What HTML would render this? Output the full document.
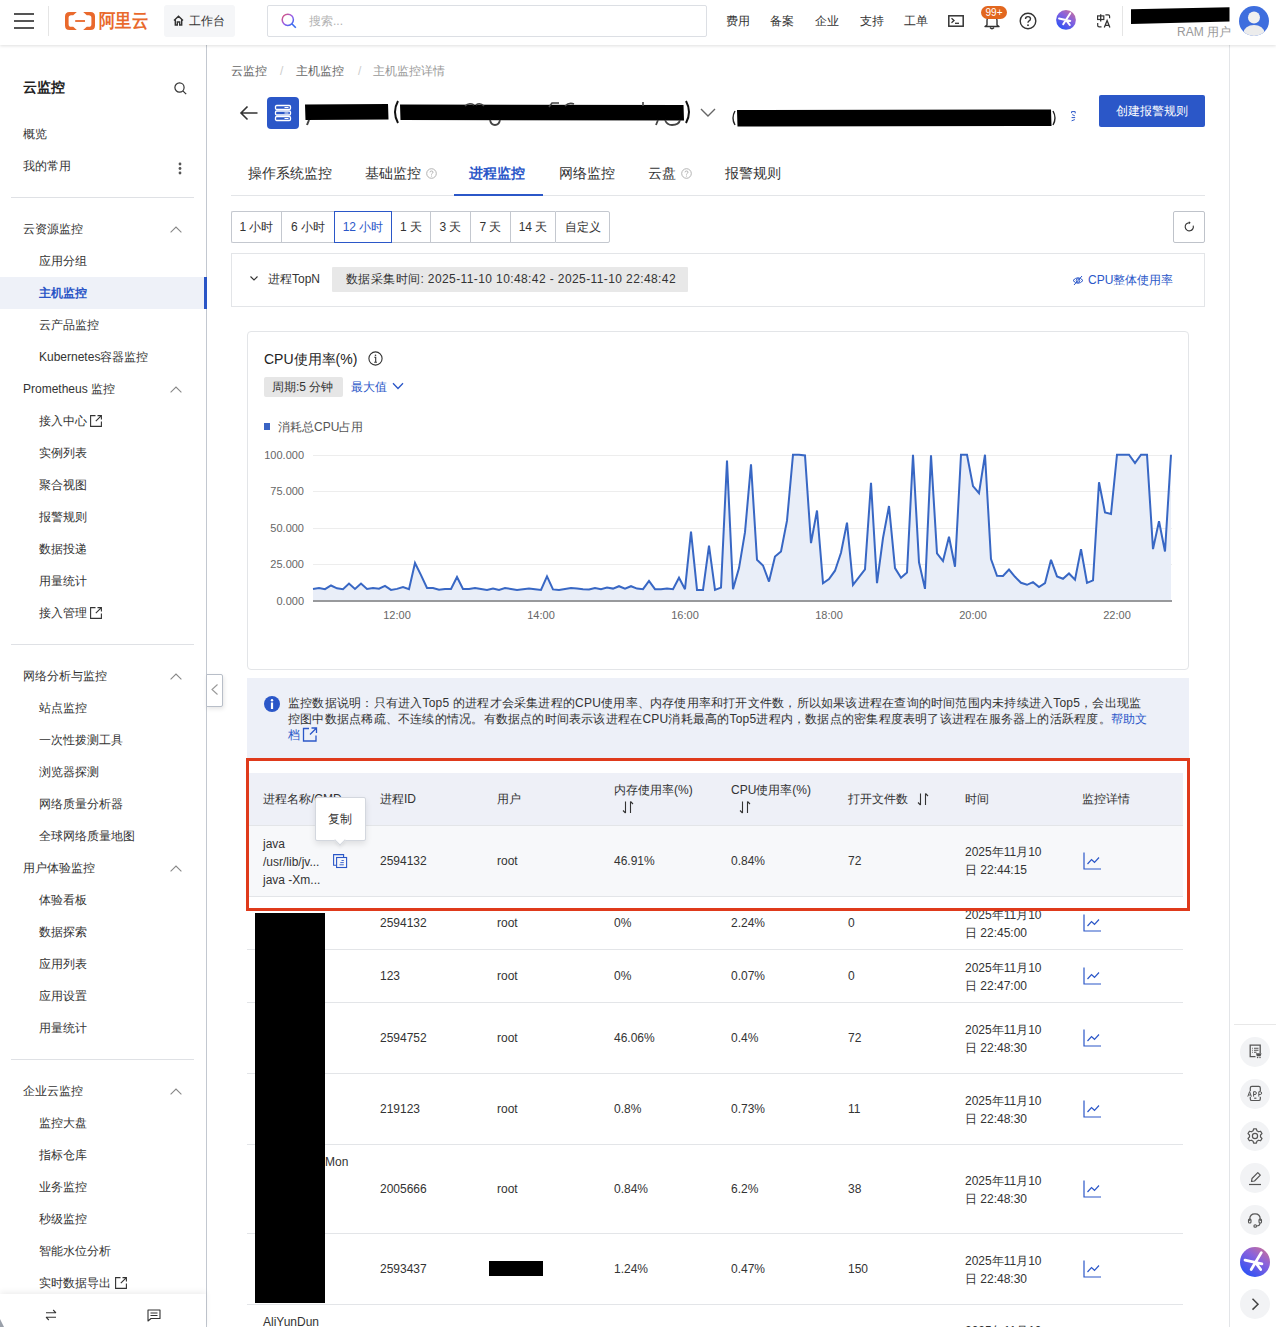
<!DOCTYPE html>
<html><head><meta charset="utf-8">
<style>
*{box-sizing:border-box;margin:0;padding:0}
html,body{width:1276px;height:1327px;overflow:hidden;background:#fff}
body{position:relative;font-family:"Liberation Sans",sans-serif;color:#333;font-size:12px;line-height:1}
.a{position:absolute;white-space:nowrap}
svg{position:absolute;overflow:visible}
/* topbar */
#top{position:absolute;left:0;top:0;width:1276px;height:45px;background:#fff;box-shadow:0 1px 3px rgba(0,0,0,.13);z-index:5}
.nav{font-size:12px;color:#333;top:15px}
/* sidebar */
#side{position:absolute;left:0;top:45px;width:207px;height:1282px;background:#fff;border-right:1px solid #c3c8d0}
.si{font-size:12px;color:#333;left:39px}
.sg{font-size:12px;color:#333;left:23px}
.sep{position:absolute;left:11px;width:183px;height:1px;background:#dfe1e5}
.chev{position:absolute;left:170px;width:12px;height:7px}
/* main */
.bc{font-size:12px;color:#666;top:64px}
.tab{font-size:14px;color:#333;top:166px}
.tb{position:absolute;top:211px;height:32px;border:1px solid #c4c8cf;border-right:none;font-size:12px;color:#333;text-align:center;line-height:30px;white-space:nowrap}
.th{font-size:12px;color:#333}
.td{font-size:12px;color:#333}
.rl{position:absolute;left:247px;width:936px;height:1px;background:#e3e5e8}
.ic{position:absolute;width:18px;height:18px}
.rc{position:absolute;left:1240px;width:30px;height:30px;border-radius:50%;background:#f2f3f5}
</style></head><body>

<!-- ================= TOP BAR ================= -->
<div id="top">
  <!-- hamburger -->
  <div style="position:absolute;left:14px;top:13px;width:20px;height:2px;background:#555"></div>
  <div style="position:absolute;left:14px;top:20px;width:20px;height:2px;background:#555"></div>
  <div style="position:absolute;left:14px;top:27px;width:20px;height:2px;background:#555"></div>
  <div style="position:absolute;left:48px;top:6px;width:1px;height:30px;background:#e5e5e5"></div>
  <!-- logo -->
  <svg style="left:65px;top:12px" width="30" height="18" viewBox="0 0 30 18">
    <path id="lb" d="M4.5 0H11.8L8.2 3.2H6.2Q3.6 3.2 3.6 5.8V12.2Q3.6 14.8 6.2 14.8H8.2L11.8 18H4.5Q0 18 0 13.5V4.5Q0 0 4.5 0Z" fill="#e9692c"/>
    <path d="M4.5 0H11.8L8.2 3.2H6.2Q3.6 3.2 3.6 5.8V12.2Q3.6 14.8 6.2 14.8H8.2L11.8 18H4.5Q0 18 0 13.5V4.5Q0 0 4.5 0Z" fill="#e9692c" transform="translate(30,0) scale(-1,1)"/>
    <rect x="10.2" y="8.1" width="9.8" height="1.8" fill="#e9692c"/>
  </svg>
  <div class="a" style="left:99px;top:11px;font-size:19px;font-weight:bold;color:#e9692c;transform:scaleX(0.86);transform-origin:0 0">阿里云</div>
  <!-- workbench -->
  <div style="position:absolute;left:164px;top:5px;width:71px;height:32px;background:#f5f6f8;border-radius:3px"></div>
  <svg style="left:173px;top:15px" width="11" height="11" viewBox="0 0 11 11"><path d="M1 5.5L5.5 1.2L10 5.5M2.3 4.5V10H4.3V7H6.7V10H8.7V4.5" fill="none" stroke="#333" stroke-width="1.4"/></svg>
  <div class="a" style="left:189px;top:15px;font-size:12px;color:#333">工作台</div>
  <!-- search -->
  <div style="position:absolute;left:267px;top:5px;width:440px;height:32px;border:1px solid #dcdfe4;border-radius:2px;background:#fff"></div>
  <svg style="left:281px;top:13px" width="16" height="16" viewBox="0 0 16 16"><defs><linearGradient id="sg" x1="0" y1="0" x2="1" y2="1"><stop offset="0" stop-color="#e0556d"/><stop offset="0.5" stop-color="#9a5ce8"/><stop offset="1" stop-color="#2f6cf0"/></linearGradient></defs><circle cx="6.8" cy="6.8" r="5.6" fill="none" stroke="url(#sg)" stroke-width="1.5"/><path d="M10.8 10.8L14.8 14.8" stroke="#3a6cf0" stroke-width="1.6"/></svg>
  <div class="a" style="left:309px;top:15px;font-size:12px;color:#b3b3b3">搜索...</div>
  <!-- nav -->
  <div class="a nav" style="left:726px">费用</div>
  <div class="a nav" style="left:770px">备案</div>
  <div class="a nav" style="left:815px">企业</div>
  <div class="a nav" style="left:860px">支持</div>
  <div class="a nav" style="left:904px">工单</div>
  <!-- terminal -->
  <svg style="left:948px;top:15px" width="16" height="12" viewBox="0 0 16 12"><rect x="0.8" y="0.8" width="14.4" height="10.4" fill="none" stroke="#333" stroke-width="1.5"/><path d="M3.5 3.3L6 5.5L3.5 7.7" fill="none" stroke="#333" stroke-width="1.3"/><path d="M7 8.3H11" stroke="#333" stroke-width="1.3"/></svg>
  <!-- bell -->
  <svg style="left:983px;top:13px" width="18" height="17" viewBox="0 0 18 17"><path d="M4 12V7.5Q4 2.5 9 2.5Q14 2.5 14 7.5V12L16 13.5H2Z" fill="none" stroke="#333" stroke-width="1.4" stroke-linejoin="round"/><path d="M7 14.5Q9 17 11 14.5" fill="none" stroke="#333" stroke-width="1.3"/></svg>
  <div class="a" style="left:981px;top:6px;width:26px;height:13px;border-radius:7px;background:#e2671f;color:#fff;font-size:10px;line-height:13px;text-align:center">99+</div>
  <!-- help -->
  <svg style="left:1019px;top:12px" width="18" height="18" viewBox="0 0 18 18"><circle cx="9" cy="9" r="7.8" fill="none" stroke="#333" stroke-width="1.4"/><path d="M6.5 7Q6.5 4.6 9 4.6Q11.5 4.6 11.5 6.8Q11.5 8.3 9.8 9.1Q9 9.5 9 10.8" fill="none" stroke="#333" stroke-width="1.4"/><circle cx="9" cy="13.2" r="0.9" fill="#333"/></svg>
  <!-- gradient ai -->
  <svg style="left:1056px;top:10px" width="20" height="20" viewBox="0 0 20 20"><defs><linearGradient id="ag" x1="1" y1="0" x2="0.3" y2="1"><stop offset="0" stop-color="#d5728a"/><stop offset="0.45" stop-color="#8a62dc"/><stop offset="1" stop-color="#2d52f5"/></linearGradient></defs><circle cx="10" cy="9.9" r="9.9" fill="url(#ag)"/><path d="M14.3 3.2L7.2 14.2M3.05 8.4L14.3 10.9M9.9 9.8L13.8 15" stroke="#fff" stroke-width="2" stroke-linecap="round"/></svg>
  <!-- translate -->
  
  <svg style="left:1096px;top:13px" width="16" height="16" viewBox="0 0 16 16"><rect x="1.6" y="2.9" width="6.2" height="3.6" fill="none" stroke="#333" stroke-width="1.2"/><path d="M4.7 1.2V8.6" stroke="#333" stroke-width="1.3"/><path d="M9.4 1.8H12.3Q13.6 1.8 13.6 3.2V5.3M1.7 10V12.4Q1.7 13.8 3.2 13.8H5.5" fill="none" stroke="#333" stroke-width="1.2"/><path d="M8.3 14.6L11.1 7.6L13.9 14.6M9.3 12.3H12.9" fill="none" stroke="#333" stroke-width="1.3"/></svg>
  <div style="position:absolute;left:1122px;top:6px;width:1px;height:30px;background:#e5e5e5"></div>
  <!-- user -->
  <svg style="left:1131px;top:7px" width="99" height="18" viewBox="0 0 99 18"><path d="M0 2.2L98.5 0.2V14.5L0 17Z" fill="#000"/></svg>
  <div class="a" style="left:1177px;top:26px;font-size:12px;color:#999">RAM 用户</div>
  <svg style="left:1239px;top:6px" width="30" height="30" viewBox="0 0 30 30"><defs><clipPath id="avc"><circle cx="15" cy="15" r="15"/></clipPath></defs><circle cx="15" cy="15" r="15" fill="#3e6ede"/><g clip-path="url(#avc)"><circle cx="15" cy="11.5" r="6" fill="#f0f0f0"/><ellipse cx="15" cy="27" rx="10.5" ry="8" fill="#ececec"/></g></svg>
</div>

<!-- ================= SIDEBAR ================= -->
<div id="side"></div>
<div class="a" style="left:23px;top:80px;font-size:14px;font-weight:bold;color:#222">云监控</div>
<svg style="left:174px;top:82px" width="13" height="13" viewBox="0 0 13 13"><circle cx="5.5" cy="5.5" r="4.6" fill="none" stroke="#333" stroke-width="1.2"/><path d="M8.8 8.8L12.2 12.2" stroke="#333" stroke-width="1.2"/></svg>
<div class="a sg" style="top:128px">概览</div>
<div class="a sg" style="top:160px">我的常用</div>
<svg style="left:177px;top:161px" width="6" height="14" viewBox="0 0 6 14"><circle cx="3" cy="3" r="1.4" fill="#555"/><circle cx="3" cy="7.5" r="1.4" fill="#555"/><circle cx="3" cy="12" r="1.4" fill="#555"/></svg>
<div class="sep" style="top:197px"></div>

<div class="a sg" style="top:223px">云资源监控</div>
<div class="a si" style="top:255px">应用分组</div>
<div style="position:absolute;left:0;top:277px;width:206px;height:32px;background:#eef1f8"></div>
<div style="position:absolute;left:204px;top:277px;width:3px;height:32px;background:#2a55c6"></div>
<div class="a si" style="top:287px;color:#2a55c6;font-weight:bold">主机监控</div>
<div class="a si" style="top:319px">云产品监控</div>
<div class="a si" style="top:351px">Kubernetes容器监控</div>
<div class="a sg" style="top:383px">Prometheus 监控</div>
<div class="a si" style="top:415px">接入中心</div>
<div class="a si" style="top:447px">实例列表</div>
<div class="a si" style="top:479px">聚合视图</div>
<div class="a si" style="top:511px">报警规则</div>
<div class="a si" style="top:543px">数据投递</div>
<div class="a si" style="top:575px">用量统计</div>
<div class="a si" style="top:607px">接入管理</div>
<div class="sep" style="top:644px"></div>
<div class="a sg" style="top:670px">网络分析与监控</div>
<div class="a si" style="top:702px">站点监控</div>
<div class="a si" style="top:734px">一次性拨测工具</div>
<div class="a si" style="top:766px">浏览器探测</div>
<div class="a si" style="top:798px">网络质量分析器</div>
<div class="a si" style="top:830px">全球网络质量地图</div>
<div class="a sg" style="top:862px">用户体验监控</div>
<div class="a si" style="top:894px">体验看板</div>
<div class="a si" style="top:926px">数据探索</div>
<div class="a si" style="top:958px">应用列表</div>
<div class="a si" style="top:990px">应用设置</div>
<div class="a si" style="top:1022px">用量统计</div>
<div class="sep" style="top:1059px"></div>
<div class="a sg" style="top:1085px">企业云监控</div>
<div class="a si" style="top:1117px">监控大盘</div>
<div class="a si" style="top:1149px">指标仓库</div>
<div class="a si" style="top:1181px">业务监控</div>
<div class="a si" style="top:1213px">秒级监控</div>
<div class="a si" style="top:1245px">智能水位分析</div>
<div class="a si" style="top:1277px">实时数据导出</div>
<svg style="left:170px;top:226px" width="12" height="7" viewBox="0 0 12 7"><path d="M0.6 6.4L6 1L11.4 6.4" fill="none" stroke="#888" stroke-width="1.1"/></svg>
<svg style="left:170px;top:386px" width="12" height="7" viewBox="0 0 12 7"><path d="M0.6 6.4L6 1L11.4 6.4" fill="none" stroke="#888" stroke-width="1.1"/></svg>
<svg style="left:170px;top:673px" width="12" height="7" viewBox="0 0 12 7"><path d="M0.6 6.4L6 1L11.4 6.4" fill="none" stroke="#888" stroke-width="1.1"/></svg>
<svg style="left:170px;top:865px" width="12" height="7" viewBox="0 0 12 7"><path d="M0.6 6.4L6 1L11.4 6.4" fill="none" stroke="#888" stroke-width="1.1"/></svg>
<svg style="left:170px;top:1088px" width="12" height="7" viewBox="0 0 12 7"><path d="M0.6 6.4L6 1L11.4 6.4" fill="none" stroke="#888" stroke-width="1.1"/></svg>
<svg style="left:90px;top:415px" width="12" height="12" viewBox="0 0 12 12"><path d="M5.5 0.6H0.6V11.4H11.4V6.5" fill="none" stroke="#333" stroke-width="1.1"/><path d="M7.5 0.6H11.4V4.5M11.4 0.6L5.8 6.2" fill="none" stroke="#333" stroke-width="1.1"/></svg>
<svg style="left:90px;top:607px" width="12" height="12" viewBox="0 0 12 12"><path d="M5.5 0.6H0.6V11.4H11.4V6.5" fill="none" stroke="#333" stroke-width="1.1"/><path d="M7.5 0.6H11.4V4.5M11.4 0.6L5.8 6.2" fill="none" stroke="#333" stroke-width="1.1"/></svg>
<svg style="left:115px;top:1277px" width="12" height="12" viewBox="0 0 12 12"><path d="M5.5 0.6H0.6V11.4H11.4V6.5" fill="none" stroke="#333" stroke-width="1.1"/><path d="M7.5 0.6H11.4V4.5M11.4 0.6L5.8 6.2" fill="none" stroke="#333" stroke-width="1.1"/></svg>
<div style="position:absolute;left:0;top:1294px;width:206px;height:33px;background:#fff;box-shadow:0 -2px 6px rgba(0,0,0,.07)"></div>
<svg style="left:45px;top:1309px" width="12" height="12" viewBox="0 0 12 12"><path d="M1 3.8H11M8.2 1L11 3.8M11 8.2H1M3.8 11L1 8.2" fill="none" stroke="#333" stroke-width="1.1"/></svg>
<svg style="left:147px;top:1309px" width="14" height="13" viewBox="0 0 14 13"><path d="M1 1H13V9.5H4L1 12Z" fill="none" stroke="#333" stroke-width="1.1" stroke-linejoin="round"/><path d="M3.5 4H10.5M3.5 6.5H10.5" stroke="#333" stroke-width="1.1"/></svg>
<div style="position:absolute;left:206px;top:674px;width:17px;height:33px;background:#fff;border:1px solid #b8bec8;border-left:1px solid #b8bec8;border-radius:0 2px 2px 0;box-shadow:1px 2px 4px rgba(0,0,0,.1)"></div>
<svg style="left:211px;top:684px" width="7" height="11" viewBox="0 0 7 11"><path d="M6.5 0.5L1 5.5L6.5 10.5" fill="none" stroke="#999" stroke-width="1.1"/></svg>
<svg style="left:0;top:1319px" width="6" height="8" viewBox="0 0 6 8"><path d="M0 0L4 8H0Z" fill="#9aa0aa"/></svg>
<!--SIDEBAR_ICONS-->

<!-- ================= MAIN HEADER ================= -->
<div class="a bc" style="left:231px;top:65px">云监控</div>
<div class="a bc" style="left:280px;top:65px;color:#ccc">/</div>
<div class="a bc" style="left:296px;top:65px">主机监控</div>
<div class="a bc" style="left:358px;top:65px;color:#ccc">/</div>
<div class="a bc" style="left:373px;top:65px;color:#999">主机监控详情</div>

<svg style="left:239px;top:105px" width="20" height="16" viewBox="0 0 20 16"><path d="M18.5 8H2M8.5 1.5L2 8L8.5 14.5" fill="none" stroke="#333" stroke-width="1.6"/></svg>
<div style="position:absolute;left:267px;top:97px;width:32px;height:32px;border-radius:4px;background:#2b57c8"></div>
<svg style="left:274px;top:104px" width="18" height="18" viewBox="0 0 18 18"><g fill="none" stroke="#fff" stroke-width="1.3"><rect x="1.5" y="1.5" width="15" height="4" rx="1.2"/><rect x="1.5" y="7" width="15" height="4" rx="1.2"/><rect x="1.5" y="12.5" width="15" height="4" rx="1.2"/></g><path d="M10.5 3.5H14.5M10.5 9H14.5M10.5 14.5H14.5" stroke="#fff" stroke-width="1.2"/></svg>
<!-- title redaction -->
<svg style="left:303px;top:100px" width="420" height="26" viewBox="0 0 420 26">
  <path d="M2 4.5L85 4L85.5 19.5L2.5 20Z" fill="#000"/>
  
  <path d="M97 4.5L380.5 5L381 20.5L97.5 20Z" fill="#000"/>
  <path d="M95 1Q89 12 95 23" fill="none" stroke="#111" stroke-width="2"/>
  <path d="M383 1Q389 12 383 23" fill="none" stroke="#111" stroke-width="2"/>
  <path d="M162 6Q166 2 171 5M173 5Q177 2 181 6" fill="none" stroke="#444" stroke-width="1.6"/>
  <path d="M187 20Q188 25 192 25Q196 25 197 20" fill="none" stroke="#444" stroke-width="1.8"/>
  <path d="M246 7L249 3H256M262 6Q266 2 271 4M340 2V6" fill="none" stroke="#444" stroke-width="1.6"/>
  <path d="M355 20L353 25M362 20Q364 25 369 25Q376 25 377 20" fill="none" stroke="#444" stroke-width="1.8"/>
  <path d="M6 20L4 25" fill="none" stroke="#444" stroke-width="2"/>
  <path d="M398 9L405 16L412 9" fill="none" stroke="#666" stroke-width="1.4"/>
</svg>
<svg style="left:731px;top:108px" width="345" height="22" viewBox="0 0 345 22">
  <path d="M4 3Q0 10 4 17" fill="none" stroke="#222" stroke-width="1.4"/>
  <path d="M6 2L320 1.5L320.5 18L6.5 18.5Z" fill="#000"/>
  <path d="M322 3Q326 10 322 17" fill="none" stroke="#222" stroke-width="1.4"/>
</svg>
<svg style="left:1071px;top:111px" width="5" height="11" viewBox="0 0 5 11"><path d="M0.6 2.2V0.6H4.2V2.4M1.2 3.6L3.8 4.8M0.6 6.6H4.2M0.6 9.8L3.8 8.6" fill="none" stroke="#2b57c8" stroke-width="1"/></svg>
<div class="a" style="left:1099px;top:95px;width:106px;height:32px;background:#2b57c8;border-radius:2px;color:#fff;font-size:12px;line-height:32px;text-align:center">创建报警规则</div>

<!-- tabs -->
<div class="a tab" style="left:248px">操作系统监控</div>
<div class="a tab" style="left:365px">基础监控</div>
<svg style="left:426px;top:168px" width="11" height="11" viewBox="0 0 11 11"><circle cx="5.5" cy="5.5" r="4.8" fill="none" stroke="#aaa" stroke-width="0.9"/><path d="M4 4.3Q4 3 5.5 3Q7 3 7 4.2Q7 5 6.2 5.4Q5.5 5.7 5.5 6.6" fill="none" stroke="#aaa" stroke-width="0.9"/><circle cx="5.5" cy="8" r="0.55" fill="#aaa"/></svg>
<div class="a tab" style="left:469px;color:#2b57c8;font-weight:600">进程监控</div>
<div class="a tab" style="left:559px">网络监控</div>
<div class="a tab" style="left:648px">云盘</div>
<svg style="left:681px;top:168px" width="11" height="11" viewBox="0 0 11 11"><circle cx="5.5" cy="5.5" r="4.8" fill="none" stroke="#aaa" stroke-width="0.9"/><path d="M4 4.3Q4 3 5.5 3Q7 3 7 4.2Q7 5 6.2 5.4Q5.5 5.7 5.5 6.6" fill="none" stroke="#aaa" stroke-width="0.9"/><circle cx="5.5" cy="8" r="0.55" fill="#aaa"/></svg>
<div class="a tab" style="left:725px">报警规则</div>
<div style="position:absolute;left:231px;top:195px;width:974px;height:1px;background:#e3e5e8"></div>
<div style="position:absolute;left:454px;top:194px;width:89px;height:2px;background:#2b57c8"></div>

<!-- time buttons -->
<div class="tb" style="left:231px;width:50px;border-radius:2px 0 0 2px">1 小时</div>
<div class="tb" style="left:281px;width:53px">6 小时</div>
<div class="tb" style="left:334px;width:58px;border:1px solid #2b57c8;color:#2b57c8;z-index:2">12 小时</div>
<div class="tb" style="left:392px;width:38px;border-left:none">1 天</div>
<div class="tb" style="left:430px;width:40px">3 天</div>
<div class="tb" style="left:470px;width:40px">7 天</div>
<div class="tb" style="left:510px;width:45px">14 天</div>
<div class="tb" style="left:555px;width:55px;border-right:1px solid #c4c8cf;border-radius:0 2px 2px 0">自定义</div>
<div style="position:absolute;left:1173px;top:211px;width:32px;height:32px;border:1px solid #bfc3ca;border-radius:2px"></div>
<svg style="left:1183px;top:220px" width="12" height="13" viewBox="0 0 12 13"><path d="M10.2 5.6A4.1 4.1 0 1 1 6 2.7" fill="none" stroke="#333" stroke-width="1.1"/><path d="M5.9 1.2L7.7 2.7L5.9 4.2Z" fill="#333"/></svg>

<!-- topN panel -->
<div style="position:absolute;left:231px;top:253px;width:974px;height:54px;border:1px solid #e3e5e8"></div>
<svg style="left:250px;top:276px" width="8" height="5" viewBox="0 0 8 5"><path d="M0.5 0.5L4 4L7.5 0.5" fill="none" stroke="#333" stroke-width="1.1"/></svg>
<div class="a" style="left:268px;top:273px;font-size:12px;color:#333">进程TopN</div>
<div class="a" style="left:332px;top:267px;width:356px;height:25px;background:#e8e8e8;border-radius:1px"></div>
<div class="a" style="left:346px;top:273px;font-size:12px;color:#333;letter-spacing:0.4px">数据采集时间: 2025-11-10 10:48:42 - 2025-11-10 22:48:42</div>
<svg style="left:1072px;top:274.5px" width="12" height="11" viewBox="0 0 12 11"><path d="M1 5.5Q6 0 11 5.5Q6 11 1 5.5Z" fill="none" stroke="#2b57c8" stroke-width="1"/><circle cx="6" cy="5.5" r="1.8" fill="none" stroke="#2b57c8" stroke-width="1"/><path d="M2 10L10 1" stroke="#2b57c8" stroke-width="1"/></svg>
<div class="a" style="left:1088px;top:274px;font-size:12px;color:#2b57c8">CPU整体使用率</div>


<!-- ================= CHART CARD ================= -->
<div style="position:absolute;left:247px;top:331px;width:942px;height:339px;border:1px solid #e3e5e8;border-radius:4px"></div>
<div class="a" style="left:264px;top:352px;font-size:14px;color:#222;font-weight:500">CPU使用率(%)</div>
<svg style="left:368px;top:351px" width="15" height="15" viewBox="0 0 15 15"><circle cx="7.5" cy="7.5" r="6.6" fill="none" stroke="#333" stroke-width="1.1"/><circle cx="7.5" cy="4.3" r="0.8" fill="#333"/><path d="M6.3 6.3H7.7V11.3M6.2 11.3H8.9" fill="none" stroke="#333" stroke-width="1.1"/></svg>
<div style="position:absolute;left:264px;top:377px;width:79px;height:20px;background:#e6e6e6;border-radius:2px"></div>
<div class="a" style="left:272px;top:381px;font-size:12px;color:#333">周期:5 分钟</div>
<div class="a" style="left:351px;top:381px;font-size:12px;color:#2b57c8">最大值</div>
<svg style="left:392px;top:382px" width="12" height="8" viewBox="0 0 12 8"><path d="M1 1.2L6 6.5L11 1.2" fill="none" stroke="#2b57c8" stroke-width="1.3"/></svg>
<div style="position:absolute;left:264px;top:423px;width:6px;height:7px;background:#3a64c4"></div>
<div class="a" style="left:278px;top:421px;font-size:12px;color:#555">消耗总CPU占用</div>
<!-- axis labels -->
<div class="a" style="left:240px;width:64px;text-align:right;top:450px;font-size:11px;color:#666">100.000</div>
<div class="a" style="left:240px;width:64px;text-align:right;top:486px;font-size:11px;color:#666">75.000</div>
<div class="a" style="left:240px;width:64px;text-align:right;top:523px;font-size:11px;color:#666">50.000</div>
<div class="a" style="left:240px;width:64px;text-align:right;top:559px;font-size:11px;color:#666">25.000</div>
<div class="a" style="left:240px;width:64px;text-align:right;top:596px;font-size:11px;color:#666">0.000</div>
<div class="a" style="left:367px;width:60px;text-align:center;top:610px;font-size:11px;color:#666">12:00</div>
<div class="a" style="left:511px;width:60px;text-align:center;top:610px;font-size:11px;color:#666">14:00</div>
<div class="a" style="left:655px;width:60px;text-align:center;top:610px;font-size:11px;color:#666">16:00</div>
<div class="a" style="left:799px;width:60px;text-align:center;top:610px;font-size:11px;color:#666">18:00</div>
<div class="a" style="left:943px;width:60px;text-align:center;top:610px;font-size:11px;color:#666">20:00</div>
<div class="a" style="left:1087px;width:60px;text-align:center;top:610px;font-size:11px;color:#666">22:00</div>
<svg style="left:0;top:0" width="1276" height="1327" viewBox="0 0 1276 1327">
  <g stroke="#ededed" stroke-width="1">
    <path d="M313 455.5H1172M313 491.5H1172M313 528.5H1172M313 564.5H1172"/>
  </g>
  <path d="M313,601 L313,588.9 L319,588.0 L325,589.2 L331,585.5 L337,588.3 L343,589.2 L349,583.6 L355,588.9 L361,583.6 L367,588.9 L373,588.0 L379,588.7 L385,585.8 L391,589.9 L397,588.9 L403,587.0 L409,589.2 L415,563.0 L421,575.1 L427,588.0 L433,588.0 L439,589.8 L445,588.9 L451,588.9 L457,577.0 L463,589.0 L469,589.0 L475,588.0 L481,589.0 L487,590.0 L493,588.6 L499,590.0 L505,588.0 L511,589.0 L517,590.0 L523,589.3 L529,588.6 L535,589.3 L541,590.0 L547,576.4 L553,589.4 L559,590.0 L565,589.0 L571,588.0 L577,588.5 L583,589.2 L589,589.5 L595,588.0 L601,589.2 L607,587.6 L613,588.6 L619,586.2 L625,588.6 L631,586.2 L637,588.6 L643,589.2 L649,580.9 L655,589.2 L661,589.2 L667,588.6 L673,589.2 L679,577.7 L685,589.2 L691,531.6 L697,589.9 L703,589.9 L709,545.7 L715,589.9 L721,587.6 L727,460.5 L733,589.2 L739,568.1 L745,532.2 L751,464.3 L757,559.8 L763,565.5 L769,581.6 L775,556.6 L781,551.5 L787,520.7 L793,454.7 L799,454.7 L805,455.4 L811,543.1 L817,510.5 L823,583.2 L829,579.0 L835,570.7 L841,552.7 L847,522.6 L853,584.8 L859,577.1 L865,569.4 L871,482.9 L877,583.2 L883,538.0 L889,506.0 L895,568.1 L901,577.7 L907,572.6 L913,454.7 L919,562.3 L925,588.9 L931,455.4 L937,553.4 L943,561.0 L949,536.7 L955,566.8 L961,454.7 L967,454.7 L973,486.1 L979,493.2 L985,454.7 L991,559.1 L997,575.8 L1003,576.0 L1009,569.6 L1015,576.8 L1021,582.8 L1027,584.8 L1033,582.2 L1039,587.1 L1045,583.2 L1051,559.8 L1057,576.4 L1063,578.8 L1069,573.5 L1075,579.6 L1081,549.1 L1087,582.8 L1093,580.3 L1099,482.3 L1105,512.4 L1111,514.0 L1117,454.7 L1123,454.7 L1129,454.7 L1135,463.1 L1141,454.7 L1147,454.7 L1153,549.1 L1159,521.3 L1165,551.5 L1171,454.7 L1171,601 Z" fill="#e9eef8"/>
  <path d="M313 601H1172" stroke="#98999c" stroke-width="2"/>
  <polyline points="313,588.9 319,588.0 325,589.2 331,585.5 337,588.3 343,589.2 349,583.6 355,588.9 361,583.6 367,588.9 373,588.0 379,588.7 385,585.8 391,589.9 397,588.9 403,587.0 409,589.2 415,563.0 421,575.1 427,588.0 433,588.0 439,589.8 445,588.9 451,588.9 457,577.0 463,589.0 469,589.0 475,588.0 481,589.0 487,590.0 493,588.6 499,590.0 505,588.0 511,589.0 517,590.0 523,589.3 529,588.6 535,589.3 541,590.0 547,576.4 553,589.4 559,590.0 565,589.0 571,588.0 577,588.5 583,589.2 589,589.5 595,588.0 601,589.2 607,587.6 613,588.6 619,586.2 625,588.6 631,586.2 637,588.6 643,589.2 649,580.9 655,589.2 661,589.2 667,588.6 673,589.2 679,577.7 685,589.2 691,531.6 697,589.9 703,589.9 709,545.7 715,589.9 721,587.6 727,460.5 733,589.2 739,568.1 745,532.2 751,464.3 757,559.8 763,565.5 769,581.6 775,556.6 781,551.5 787,520.7 793,454.7 799,454.7 805,455.4 811,543.1 817,510.5 823,583.2 829,579.0 835,570.7 841,552.7 847,522.6 853,584.8 859,577.1 865,569.4 871,482.9 877,583.2 883,538.0 889,506.0 895,568.1 901,577.7 907,572.6 913,454.7 919,562.3 925,588.9 931,455.4 937,553.4 943,561.0 949,536.7 955,566.8 961,454.7 967,454.7 973,486.1 979,493.2 985,454.7 991,559.1 997,575.8 1003,576.0 1009,569.6 1015,576.8 1021,582.8 1027,584.8 1033,582.2 1039,587.1 1045,583.2 1051,559.8 1057,576.4 1063,578.8 1069,573.5 1075,579.6 1081,549.1 1087,582.8 1093,580.3 1099,482.3 1105,512.4 1111,514.0 1117,454.7 1123,454.7 1129,454.7 1135,463.1 1141,454.7 1147,454.7 1153,549.1 1159,521.3 1165,551.5 1171,454.7" fill="none" stroke="#3867c4" stroke-width="2" stroke-linejoin="miter" stroke-miterlimit="3"/>
</svg>


<!-- ================= ALERT ================= -->
<div style="position:absolute;left:247px;top:678px;width:942px;height:80px;background:#edf0f8"></div>
<svg style="left:264px;top:696px" width="16" height="16" viewBox="0 0 16 16"><circle cx="8" cy="8" r="8" fill="#2b57c8"/><circle cx="8" cy="4.3" r="1.2" fill="#fff"/><rect x="6.9" y="6.5" width="2.2" height="6.5" fill="#fff"/></svg>
<div class="a" style="left:288px;top:695px;font-size:12px;color:#333;line-height:16px;letter-spacing:0.22px">监控数据说明：只有进入Top5 的进程才会采集进程的CPU使用率、内存使用率和打开文件数，所以如果该进程在查询的时间范围内未持续进入Top5，会出现监<br>控图中数据点稀疏、不连续的情况。有数据点的时间表示该进程在CPU消耗最高的Top5进程内，数据点的密集程度表明了该进程在服务器上的活跃程度。<span style="color:#2b57c8">帮助文</span><br><span style="color:#2b57c8">档</span></div>
<svg style="left:302px;top:727px" width="16" height="15" viewBox="0 0 16 15"><path d="M7 1.5H1.5V14H14V8.5" fill="none" stroke="#2b57c8" stroke-width="1.3"/><path d="M9.5 1H14.5V6M14.5 1L8 7.5" fill="none" stroke="#2b57c8" stroke-width="1.3"/></svg>

<!-- ================= TABLE ================= -->
<div style="position:absolute;left:247px;top:773px;width:936px;height:52px;background:#eef0f7"></div>
<div class="rl" style="top:825px"></div>
<div style="position:absolute;left:247px;top:826px;width:936px;height:70px;background:#f7f8fa"></div>
<div class="rl" style="top:896px"></div>
<div class="a th" style="left:263px;top:793px">进程名称/CMD</div>
<div class="a th" style="left:380px;top:793px">进程ID</div>
<div class="a th" style="left:497px;top:793px">用户</div>
<div class="a th" style="left:614px;top:784px">内存使用率(%)</div>
<div class="a th" style="left:731px;top:784px">CPU使用率(%)</div>
<div class="a th" style="left:848px;top:793px">打开文件数</div>
<div class="a th" style="left:965px;top:793px">时间</div>
<div class="a th" style="left:1082px;top:793px">监控详情</div>

<svg style="left:622px;top:801px" width="12" height="13" viewBox="0 0 12 13"><path d="M3.5 0.5V12M1 9.5L3.5 12" fill="none" stroke="#333" stroke-width="1.1"/><path d="M8.5 12V0.5M11 3L8.5 0.5" fill="none" stroke="#333" stroke-width="1.1"/></svg>
<svg style="left:739px;top:801px" width="12" height="13" viewBox="0 0 12 13"><path d="M3.5 0.5V12M1 9.5L3.5 12" fill="none" stroke="#333" stroke-width="1.1"/><path d="M8.5 12V0.5M11 3L8.5 0.5" fill="none" stroke="#333" stroke-width="1.1"/></svg>
<svg style="left:917px;top:793px" width="12" height="13" viewBox="0 0 12 13"><path d="M3.5 0.5V12M1 9.5L3.5 12" fill="none" stroke="#333" stroke-width="1.1"/><path d="M8.5 12V0.5M11 3L8.5 0.5" fill="none" stroke="#333" stroke-width="1.1"/></svg>
<div class="a td" style="left:263px;top:835px;line-height:18px">java<br>/usr/lib/jv...<br>java -Xm...</div>
<svg style="left:333px;top:854px" width="15" height="14" viewBox="0 0 15 14"><path d="M3 11.3H0.6V0.6H10.6V3" fill="none" stroke="#2b57c8" stroke-width="1.1"/><rect x="3.6" y="3.5" width="10" height="10" fill="none" stroke="#2b57c8" stroke-width="1.1"/><path d="M8.5 6.5H10.8M7.3 8.6H10.8M6.5 10.8H10.8" stroke="#2b57c8" stroke-width="0.9"/></svg>
<div class="a td" style="left:380px;top:855px">2594132</div>
<div class="a td" style="left:497px;top:855px">root</div>
<div class="a td" style="left:614px;top:855px">46.91%</div>
<div class="a td" style="left:731px;top:855px">0.84%</div>
<div class="a td" style="left:848px;top:855px">72</div>
<div class="a td" style="left:965px;top:843px;line-height:18px">2025年11月10<br>日 22:44:15</div>

<svg style="left:1083px;top:852px" width="18" height="18" viewBox="0 0 18 18"><path d="M1 0.5V17H18" fill="none" stroke="#2b57c8" stroke-width="1.2"/><path d="M4.5 12L8.5 7.5L11.5 10.3L16 5.5" fill="none" stroke="#2b57c8" stroke-width="1.2"/></svg>
<div class="rl" style="top:949px"></div>
<div class="a td" style="left:380px;top:917px">2594132</div>
<div class="a td" style="left:497px;top:917px">root</div>
<div class="a td" style="left:614px;top:917px">0%</div>
<div class="a td" style="left:731px;top:917px">2.24%</div>
<div class="a td" style="left:848px;top:917px">0</div>
<div class="a td" style="left:965px;top:906px;line-height:18px">2025年11月10<br>日 22:45:00</div>
<svg style="left:1083px;top:914px" width="18" height="18" viewBox="0 0 18 18"><path d="M1 0.5V17H18" fill="none" stroke="#2b57c8" stroke-width="1.2"/><path d="M4.5 12L8.5 7.5L11.5 10.3L16 5.5" fill="none" stroke="#2b57c8" stroke-width="1.2"/></svg>
<div class="rl" style="top:1002px"></div>
<div class="a td" style="left:380px;top:970px">123</div>
<div class="a td" style="left:497px;top:970px">root</div>
<div class="a td" style="left:614px;top:970px">0%</div>
<div class="a td" style="left:731px;top:970px">0.07%</div>
<div class="a td" style="left:848px;top:970px">0</div>
<div class="a td" style="left:965px;top:959px;line-height:18px">2025年11月10<br>日 22:47:00</div>
<svg style="left:1083px;top:967px" width="18" height="18" viewBox="0 0 18 18"><path d="M1 0.5V17H18" fill="none" stroke="#2b57c8" stroke-width="1.2"/><path d="M4.5 12L8.5 7.5L11.5 10.3L16 5.5" fill="none" stroke="#2b57c8" stroke-width="1.2"/></svg>
<div class="rl" style="top:1073px"></div>
<div class="a td" style="left:380px;top:1032px">2594752</div>
<div class="a td" style="left:497px;top:1032px">root</div>
<div class="a td" style="left:614px;top:1032px">46.06%</div>
<div class="a td" style="left:731px;top:1032px">0.4%</div>
<div class="a td" style="left:848px;top:1032px">72</div>
<div class="a td" style="left:965px;top:1021px;line-height:18px">2025年11月10<br>日 22:48:30</div>
<svg style="left:1083px;top:1029px" width="18" height="18" viewBox="0 0 18 18"><path d="M1 0.5V17H18" fill="none" stroke="#2b57c8" stroke-width="1.2"/><path d="M4.5 12L8.5 7.5L11.5 10.3L16 5.5" fill="none" stroke="#2b57c8" stroke-width="1.2"/></svg>
<div class="rl" style="top:1144px"></div>
<div class="a td" style="left:380px;top:1103px">219123</div>
<div class="a td" style="left:497px;top:1103px">root</div>
<div class="a td" style="left:614px;top:1103px">0.8%</div>
<div class="a td" style="left:731px;top:1103px">0.73%</div>
<div class="a td" style="left:848px;top:1103px">11</div>
<div class="a td" style="left:965px;top:1092px;line-height:18px">2025年11月10<br>日 22:48:30</div>
<svg style="left:1083px;top:1100px" width="18" height="18" viewBox="0 0 18 18"><path d="M1 0.5V17H18" fill="none" stroke="#2b57c8" stroke-width="1.2"/><path d="M4.5 12L8.5 7.5L11.5 10.3L16 5.5" fill="none" stroke="#2b57c8" stroke-width="1.2"/></svg>
<div class="rl" style="top:1233px"></div>
<div class="a td" style="left:380px;top:1183px">2005666</div>
<div class="a td" style="left:497px;top:1183px">root</div>
<div class="a td" style="left:614px;top:1183px">0.84%</div>
<div class="a td" style="left:731px;top:1183px">6.2%</div>
<div class="a td" style="left:848px;top:1183px">38</div>
<div class="a td" style="left:965px;top:1172px;line-height:18px">2025年11月10<br>日 22:48:30</div>
<svg style="left:1083px;top:1180px" width="18" height="18" viewBox="0 0 18 18"><path d="M1 0.5V17H18" fill="none" stroke="#2b57c8" stroke-width="1.2"/><path d="M4.5 12L8.5 7.5L11.5 10.3L16 5.5" fill="none" stroke="#2b57c8" stroke-width="1.2"/></svg>
<div class="rl" style="top:1304px"></div>
<div class="a td" style="left:380px;top:1263px">2593437</div>
<div class="a td" style="left:614px;top:1263px">1.24%</div>
<div class="a td" style="left:731px;top:1263px">0.47%</div>
<div class="a td" style="left:848px;top:1263px">150</div>
<div class="a td" style="left:965px;top:1252px;line-height:18px">2025年11月10<br>日 22:48:30</div>
<svg style="left:1083px;top:1260px" width="18" height="18" viewBox="0 0 18 18"><path d="M1 0.5V17H18" fill="none" stroke="#2b57c8" stroke-width="1.2"/><path d="M4.5 12L8.5 7.5L11.5 10.3L16 5.5" fill="none" stroke="#2b57c8" stroke-width="1.2"/></svg>
<div style="position:absolute;left:489px;top:1261px;width:54px;height:15px;background:#000"></div>
<div class="a td" style="left:325px;top:1156px">Mon</div>
<div style="position:absolute;left:255px;top:913px;width:70px;height:390px;background:#000"></div>
<div class="a td" style="left:263px;top:1316px">AliYunDun</div>
<div class="a td" style="left:965px;top:1325px">2025年11月10</div>
<!-- red box -->
<div style="position:absolute;left:246px;top:758px;width:944px;height:153px;border:3px solid #df3a1b"></div>
<!-- tooltip -->
<div style="position:absolute;left:315px;top:797px;width:51px;height:44px;background:#fff;border:1px solid #d3d7de;border-radius:2px;box-shadow:0 3px 6px rgba(0,0,0,.10)"></div>
<div style="position:absolute;left:336px;top:836px;width:8px;height:8px;background:#fff;transform:rotate(45deg);border-right:1px solid #d3d7de;border-bottom:1px solid #d3d7de;box-shadow:2px 2px 3px rgba(0,0,0,.05)"></div>
<div class="a" style="left:328px;top:813px;font-size:12px;color:#333">复制</div>

<!-- ================= RIGHT RAIL ================= -->
<div style="position:absolute;left:1229px;top:45px;width:1px;height:1282px;background:#e3e5e8"></div>
<div style="position:absolute;left:1234px;top:1024px;width:42px;height:1px;background:#e8e8e8"></div>

<div class="rc" style="top:1037px"></div>
<div class="rc" style="top:1079px"></div>
<div class="rc" style="top:1121px"></div>
<div class="rc" style="top:1163px"></div>
<div class="rc" style="top:1205px"></div>
<svg style="left:1240px;top:1247px" width="30" height="30" viewBox="0 0 30 30"><defs><linearGradient id="ag2" x1="1" y1="0" x2="0.3" y2="1"><stop offset="0" stop-color="#d5728a"/><stop offset="0.45" stop-color="#8a62dc"/><stop offset="1" stop-color="#2d52f5"/></linearGradient></defs><circle cx="15" cy="15" r="15" fill="url(#ag2)"/><path d="M21.3 5.6L11.2 22.5M5 13.1L21.9 16.9M15.6 15.6L20.7 22.5" stroke="#fff" stroke-width="2.8" stroke-linecap="round"/></svg>
<div class="rc" style="top:1289px"></div>
<svg style="left:1245px;top:1042px" width="20" height="20" viewBox="0 0 20 20"><path d="M10.5 14.7H5.2V3.2H15.2V11" fill="none" stroke="#555" stroke-width="1.3"/><path d="M7 6.2H7.8M7 8.2H7.8M7 10.2H7.8M9 6.2H13.5M9 8.2H13.5M9 10.2H11.5" stroke="#555" stroke-width="1.1"/><path d="M11 11.3H16.5L15.6 14.3H11.8Z" fill="#555"/><circle cx="12.6" cy="15.6" r="0.75" fill="#555"/><circle cx="15" cy="15.6" r="0.75" fill="#555"/></svg>
<svg style="left:1245px;top:1084px" width="20" height="20" viewBox="0 0 20 20"><rect x="5.3" y="2.3" width="10" height="14.2" rx="1.6" fill="none" stroke="#555" stroke-width="1.2"/><rect x="2.5" y="7.2" width="15" height="5.6" fill="#f2f3f5"/><path d="M2.8 12.6L4.6 7.6L6.4 12.6M3.5 11H5.7M8.6 12.6V7.7H10Q11.4 7.7 11.4 9.1Q11.4 10.5 10 10.5H8.6M13.8 12.6V7.7H15.2Q16.6 7.7 16.6 9.1Q16.6 10.5 15.2 10.5H13.8" fill="none" stroke="#555" stroke-width="1"/><path d="M9.2 14.2H11.4" stroke="#555" stroke-width="1.2"/></svg>
<svg style="left:1245px;top:1126px" width="20" height="20" viewBox="0 0 20 20"><circle cx="10" cy="10" r="2.6" fill="none" stroke="#555" stroke-width="1.2"/><path d="M8.6 2.8H11.4L11.9 4.8L13.6 5.8L15.6 5.2L17 7.6L15.5 9V11L17 12.4L15.6 14.8L13.6 14.2L11.9 15.2L11.4 17.2H8.6L8.1 15.2L6.4 14.2L4.4 14.8L3 12.4L4.5 11V9L3 7.6L4.4 5.2L6.4 5.8L8.1 4.8Z" fill="none" stroke="#555" stroke-width="1.2" stroke-linejoin="round"/></svg>
<svg style="left:1245px;top:1168px" width="20" height="20" viewBox="0 0 20 20"><path d="M6.5 13.5L7 10.5L12.8 4.7L15.3 7.2L9.5 13Z" fill="none" stroke="#555" stroke-width="1.2" stroke-linejoin="round"/><path d="M4 16.5H16" stroke="#555" stroke-width="1.2"/></svg>
<svg style="left:1245px;top:1210px" width="20" height="20" viewBox="0 0 20 20"><path d="M4.8 11V9Q4.8 3.8 10 3.8Q15.2 3.8 15.2 9V11" fill="none" stroke="#555" stroke-width="1.2"/><rect x="3.5" y="9" width="2.5" height="4" rx="1" fill="none" stroke="#555" stroke-width="1.1"/><rect x="14" y="9" width="2.5" height="4" rx="1" fill="none" stroke="#555" stroke-width="1.1"/><path d="M15 13Q15 16 11.5 16" fill="none" stroke="#555" stroke-width="1.1"/><circle cx="10.2" cy="16" r="1.3" fill="none" stroke="#555" stroke-width="1.1"/></svg>
<svg style="left:1245px;top:1294px" width="20" height="20" viewBox="0 0 20 20"><path d="M7.5 4.8L13 10.2L7.5 15.6" fill="none" stroke="#444" stroke-width="1.5"/></svg>
<!--MAIN-->
</body></html>
